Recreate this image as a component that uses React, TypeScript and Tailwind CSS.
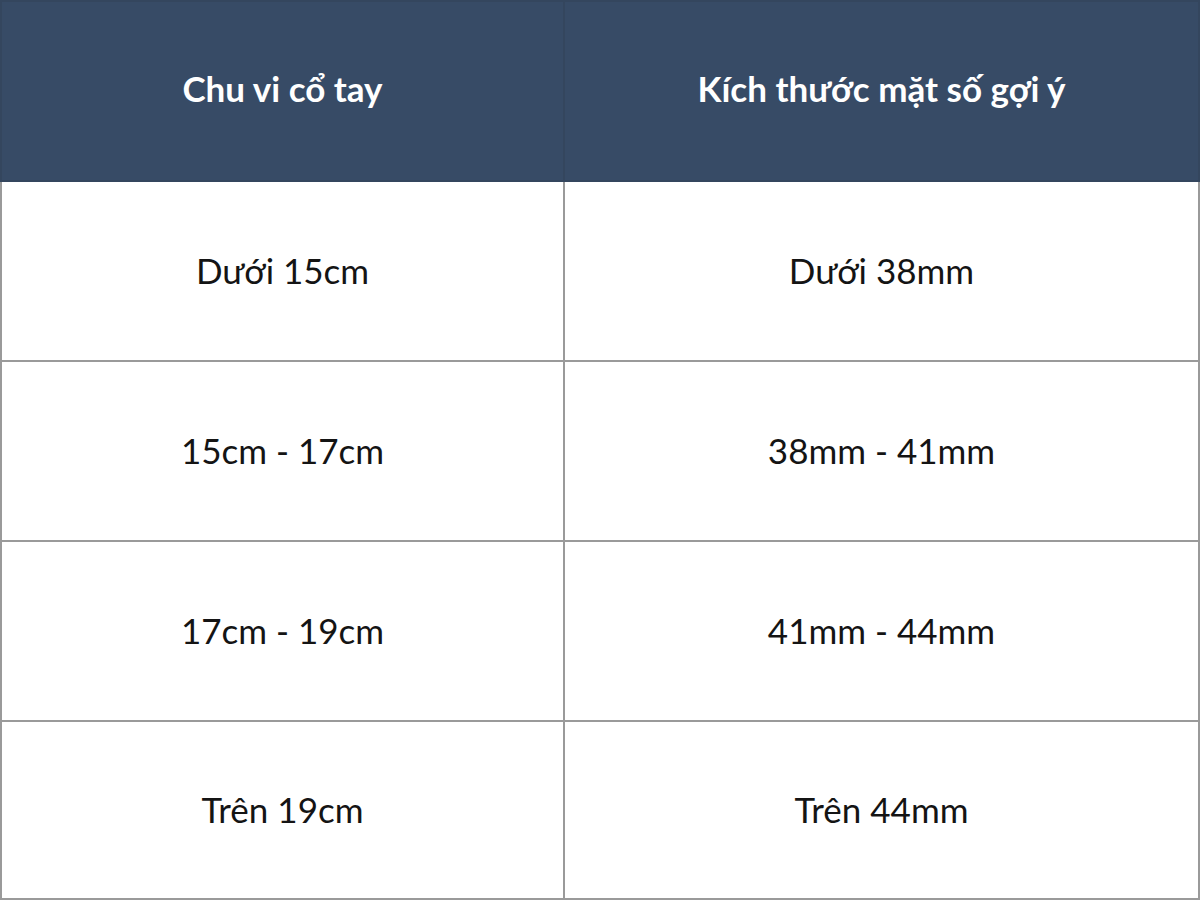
import React from "react";

const rows: [string, string][] = [
  ["Dưới 15cm", "Dưới 38mm"],
  ["15cm - 17cm", "38mm - 41mm"],
  ["17cm - 19cm", "41mm - 44mm"],
  ["Trên 19cm", "Trên 44mm"],
];

export default function App() {
  return (
    <div className="w-[1200px] h-[900px] bg-white overflow-hidden" style={{ fontFamily: "Lato, 'Noto Sans', sans-serif" }}>
      <table className="w-[1200px] border-collapse table-fixed">
        <colgroup>
          <col className="w-[563px]" />
          <col />
        </colgroup>
        <thead>
          <tr className="h-[180px] bg-[#374b66]">
            <th className="border-2 border-[#34465e] text-white font-bold text-[35px] text-center align-middle pb-[6px]">Chu vi cổ tay</th>
            <th className="border-2 border-[#34465e] text-white font-bold text-[35px] text-center align-middle pb-[6px]">Kích thước mặt số gợi ý</th>
          </tr>
        </thead>
        <tbody>
          {rows.map((r, i) => (
            <tr key={i} className={i === rows.length - 1 ? "h-[178px]" : "h-[180px]"}>
              <td className="border-2 border-[#9a9a9a] text-[#141414] text-[35px] text-center align-middle pb-[2px]">{r[0]}</td>
              <td className="border-2 border-[#9a9a9a] text-[#141414] text-[35px] text-center align-middle pb-[2px]">{r[1]}</td>
            </tr>
          ))}
        </tbody>
      </table>
    </div>
  );
}
